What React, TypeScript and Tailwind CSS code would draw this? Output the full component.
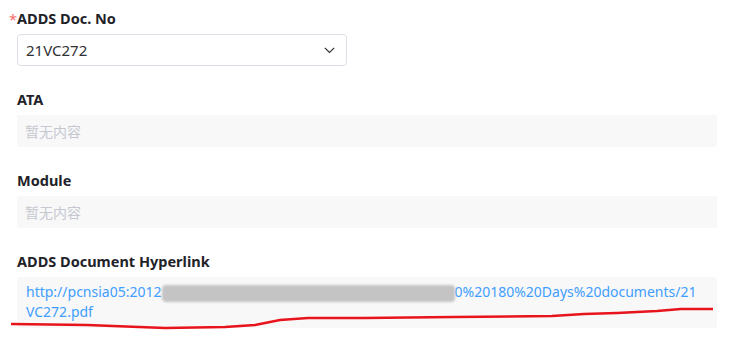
import React from "react";

const font = { fontFamily: '"Noto Sans", "Noto Sans CJK SC", sans-serif' };

function Label({ children, required }: { children: React.ReactNode; required?: boolean }) {
  return (
    <div className="relative h-[22px] leading-[22px] text-[14.5px] font-bold text-[#1f2329]">
      {required && <span className="absolute left-[-8px] top-[1px] text-[#f56c6c] font-normal">*</span>}
      {children}
    </div>
  );
}

function Empty() {
  return (
    <div className="h-[32px] rounded-[2px] bg-[#f8f8f8] px-[8px] flex items-center text-[14px] text-[#c5c8d0]">
      暂无内容
    </div>
  );
}

export default function App() {
  const pts: [number, number][] = [
    [11, 324], [87, 325], [113, 326], [165, 328], [225, 327], [255, 325], [280, 320], [308, 318],
    [364, 318], [454, 317], [552, 316], [584, 314], [617, 313], [657, 311], [681, 309], [713, 309],
  ];
  return (
    <div className="relative w-[729px] h-[346px] bg-white overflow-hidden" style={font}>
      <div className="pl-[17px] pr-[12px] pt-[7px] flex flex-col">
        <Label required>ADDS Doc. No</Label>
        <div className="mt-[5px] w-[330px] h-[32px] border border-[#dcdfe6] rounded-[4px] flex items-center justify-between pl-[8px] pr-[11px] text-[15px] text-[#303133]">
          <span>21VC272</span>
          <svg width="11" height="7" viewBox="0 0 11 7" fill="none">
            <path d="M0.8 0.8 L5.5 5.5 L10.2 0.8" stroke="#303133" strokeWidth="1.2" />
          </svg>
        </div>

        <div className="mt-[22px]">
          <Label>ATA</Label>
        </div>
        <div className="mt-[5px]">
          <Empty />
        </div>

        <div className="mt-[22px]">
          <Label>Module</Label>
        </div>
        <div className="mt-[5px]">
          <Empty />
        </div>

        <div className="mt-[22px]">
          <Label>ADDS Document Hyperlink</Label>
        </div>
        <div className="mt-[5px] bg-[#f8f8f8] rounded-[2px] pl-[9px] pt-[5px] pb-[6px] text-[14px] leading-[20px] text-[#409eff]">
          <div className="flex items-center whitespace-nowrap">
            <span>http://pcnsia05:2012</span>
            <span className="inline-block w-[293px] h-[17px] mt-[2px] bg-[#c4c4c4] rounded-[4px] blur-[0.8px]" />
            <span>0%20180%20Days%20documents/21</span>
          </div>
          <div>VC272.pdf</div>
        </div>
      </div>
      <svg className="absolute left-0 top-0 pointer-events-none" width="729" height="346">
        <polyline
          points={pts.map((p) => p.join(",")).join(" ")}
          fill="none"
          stroke="#e8141c"
          strokeWidth="2.4"
        />
      </svg>
    </div>
  );
}
